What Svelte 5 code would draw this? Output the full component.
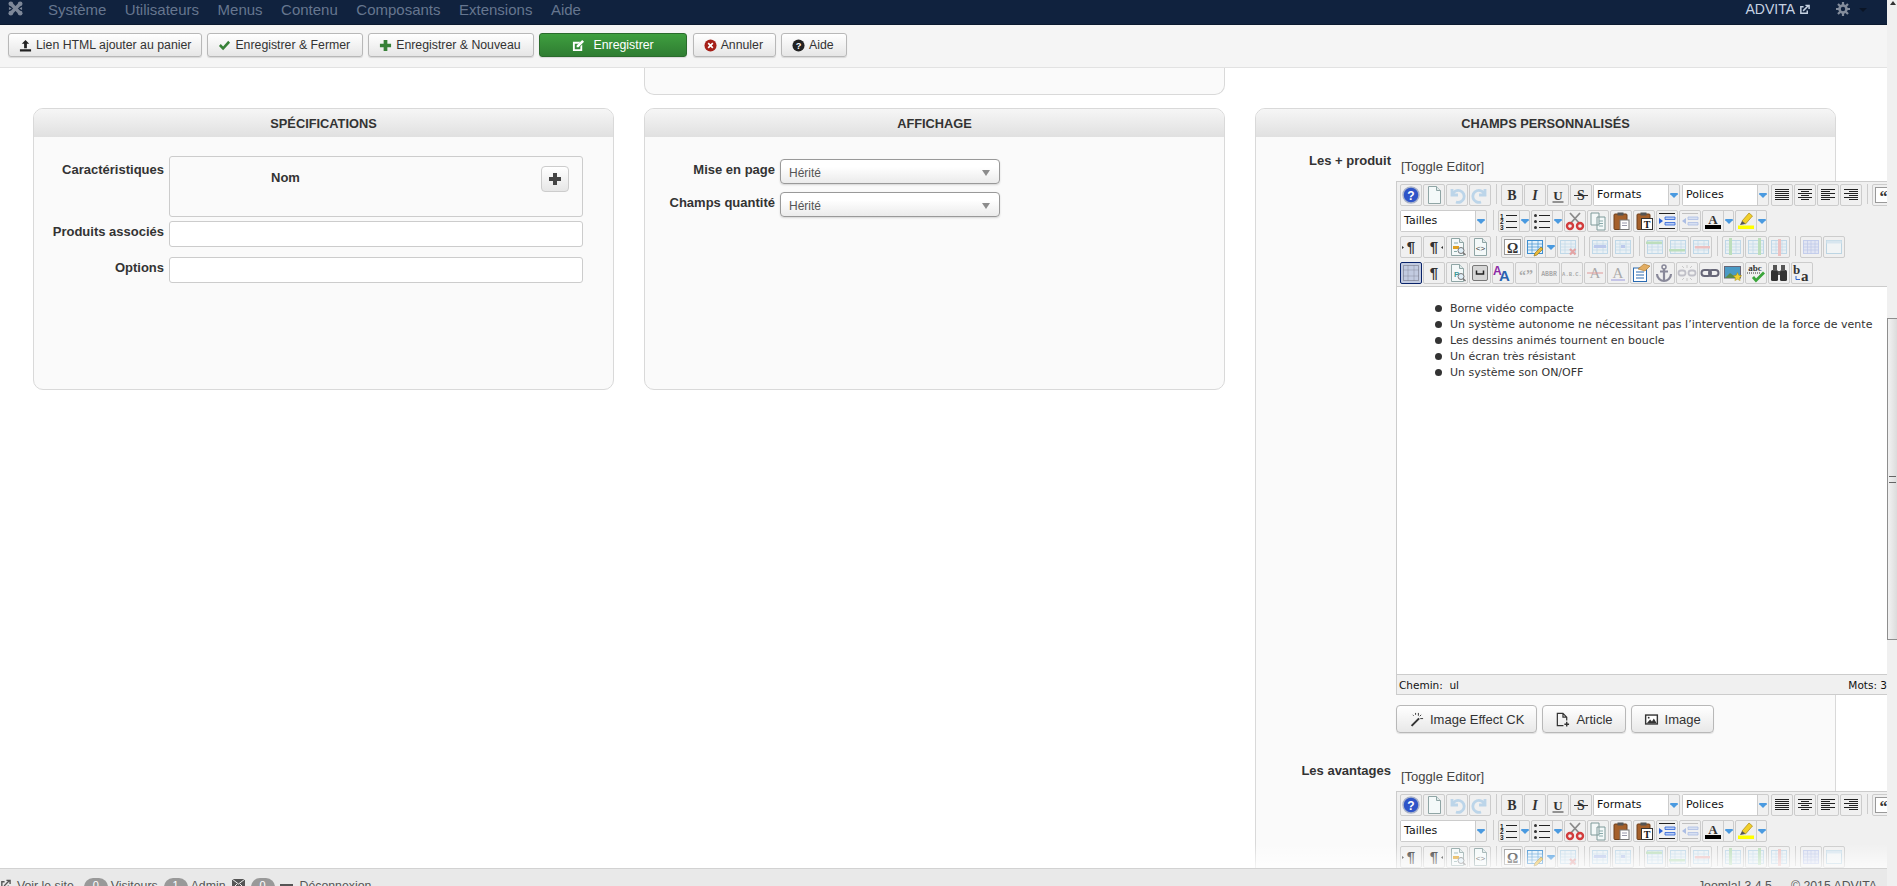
<script>
  const nav = ['Système', 'Utilisateurs', 'Menus', 'Contenu', 'Composants', 'Extensions', 'Aide'];

  const lines = (arr) => arr.map(([a, b, y, c = '#222']) => `<path d="M${a} ${y}H${b}" stroke="${c}" stroke-width="1"/>`).join('');
  const doc = '<path d="M3.500 .5h8l4 4V17.500h-12z" fill="#f4f9f9" stroke="#8fa5a5"/><path d="M11.500 .5V4.500h4" fill="#dfe9e9" stroke="#8fa5a5"/>';
  const tbl = (c = '#86bde0') => `<rect x="1.500" y="2.500" width="15" height="13" fill="#e3f1fa" stroke="${c}"/><path d="M1.500 6h15M1.500 9h15M1.500 12h15M6 2.500v13M12 2.500v13" stroke="${c}" stroke-width=".7"/>`;
  const bigA = (c) => `<text x="9" y="14" font-family="Liberation Serif" font-size="15" text-anchor="middle" fill="${c}">A</text>`;
  const glyph = (t, size = 14, fam = 'Liberation Serif', weight = 'bold', style = 'normal') =>
    `<text x="9" y="14" font-family="${fam}" font-size="${size}" font-weight="${weight}" font-style="${style}" text-anchor="middle" fill="#333">${t}</text>`;
  const clip = '<rect x="2" y="2" width="13" height="15.500" rx="1" fill="#a5602a" stroke="#6e3f1a"/><rect x="5.500" y=".5" width="6" height="3" fill="#555"/>';

  const icons = {
    help: '<circle cx="9" cy="9" r="8" fill="#2f55c8" stroke="#a9b3c9" stroke-width="1.500"/><text x="9" y="13.500" font-family="Liberation Sans" font-size="12" font-weight="bold" text-anchor="middle" fill="#fff">?</text>',
    doc,
    undo: '<path d="M4 3v6h6M4.500 8.500A6 6 0 1 1 8 16" fill="none" stroke="#7db4e0" stroke-width="2.800"/>',
    redo: '<path d="M14 3v6H8M13.500 8.500A6 6 0 1 0 10 16" fill="none" stroke="#7db4e0" stroke-width="2.800"/>',
    b: glyph('B'),
    i: glyph('I', 14, 'Liberation Serif', 'bold', 'italic'),
    u: glyph('U', 13) + '<path d="M3.500 16h11" stroke="#333"/>',
    s: glyph('S', 14) + '<path d="M2 9.500h14" stroke="#333"/>',
    justify: lines([[2, 16, 3.5], [2, 16, 5.5], [2, 16, 7.5], [2, 16, 9.5], [2, 16, 11.5], [2, 16, 13.5]]),
    center: lines([[2, 16, 3.5], [5, 13, 5.5], [2, 16, 7.5], [5, 13, 9.5], [2, 16, 11.5], [5, 13, 13.5]]),
    left: lines([[2, 16, 3.5], [2, 11, 5.5], [2, 16, 7.5], [2, 11, 9.5], [2, 16, 11.5], [2, 11, 13.5]]),
    right: lines([[2, 16, 3.5], [7, 16, 5.5], [2, 16, 7.5], [7, 16, 9.5], [2, 16, 11.5], [7, 16, 13.5]]),
    quote: '<rect x="1.500" y="1.500" width="16" height="15" fill="#fff" stroke="#999"/><text x="9.500" y="15.500" font-family="Liberation Serif" font-size="16" font-weight="bold" text-anchor="middle" fill="#333">“</text>',
    ol: '<text x="0" y="6.500" font-size="6.500" font-weight="bold" font-family="Liberation Sans" fill="#222">1</text><text x="0" y="12" font-size="6.500" font-weight="bold" font-family="Liberation Sans" fill="#222">2</text><text x="0" y="17.500" font-size="6.500" font-weight="bold" font-family="Liberation Sans" fill="#222">3</text>' + lines([[6, 17, 3.5], [6, 17, 9.5], [6, 17, 15.5]]),
    ul: '<circle cx="2.500" cy="3.500" r="1.500" fill="#333"/><circle cx="2.500" cy="9.500" r="1.500" fill="#333"/><circle cx="2.500" cy="15.500" r="1.500" fill="#333"/>' + lines([[6, 17, 3.5], [6, 17, 9.5], [6, 17, 15.5]]),
    cut: '<path d="M4 1l10 11M14 1L4 12" stroke="#8a8a8a" stroke-width="1.800"/><circle cx="4" cy="14" r="3" fill="none" stroke="#d23c3c" stroke-width="2.400"/><circle cx="14" cy="14" r="3" fill="none" stroke="#d23c3c" stroke-width="2.400"/>',
    copy: '<path d="M2 1h8v12H2zM8 5h8v13H8z" fill="#f3f8f8" stroke="#7f9a9a"/><path d="M10 9h4M10 11.500h4M10 14h4" stroke="#8aa"/>',
    paste: clip + '<rect x="8" y="8" width="9" height="9.500" fill="#fff" stroke="#777"/><path d="M10 11h5M10 13.500h5" stroke="#99a"/>',
    pastetext: clip + '<rect x="6.500" y="6.500" width="11" height="11" fill="#fff" stroke="#333"/><text x="12" y="16" font-family="Liberation Serif" font-size="10" font-weight="bold" text-anchor="middle" fill="#111">T</text>',
    indent: lines([[1, 17, 1.5], [1, 17, 16.5]]) + '<path d="M7 5h10v2.500H7zM7 10.500h10V13H7z" fill="#b9cdf5" stroke="#2c62d6" stroke-width=".8"/><path d="M1 6l4 3-4 3z" fill="#2c62d6"/>',
    outdent: lines([[1, 17, 1.5, '#888'], [1, 17, 16.5, '#888']]) + '<path d="M7 5h10v2.500H7zM7 10.500h10V13H7z" fill="#b9cdf5" stroke="#5c82d6" stroke-width=".8"/><path d="M5 6L1 9l4 3z" fill="#5c82d6"/>',
    fore: '<text x="9" y="11.500" font-family="Liberation Serif" font-size="13" font-weight="bold" text-anchor="middle" fill="#333">A</text><rect x="1" y="13" width="16" height="4" fill="#000"/>',
    hilite: '<path d="M5 9l7-8 3.500 3-7 8z" fill="#f2cf2a" stroke="#a88a10" stroke-width=".7"/><path d="M3 13l2-4 3.500 3z" fill="#555"/><rect x="1" y="13.500" width="16" height="3.500" fill="#ff0"/>',
    ltr: glyph('¶', 15, 'Liberation Sans') + '<path d="M0 8l2 1.500L0 11z" fill="#333"/>',
    rtl: glyph('¶', 15, 'Liberation Sans') + '<path d="M18 8l-2 1.500 2 1.500z" fill="#333"/>',
    docfind: doc + '<rect x="5" y="8" width="6" height="3" fill="#e0a020"/><path d="M6 5h4M6 13.500h3" stroke="#8aa"/><circle cx="13" cy="12.500" r="3" fill="#dfeef7" stroke="#777"/><path d="M15 14.500l2.500 2.500" stroke="#777" stroke-width="1.500"/>',
    source: doc + '<text x="9.500" y="13" font-family="Liberation Mono" font-size="8" text-anchor="middle" fill="#333">&lt;&gt;</text>',
    omega: '<rect x="1.500" y="1.500" width="16" height="15" fill="#fff" stroke="#999"/><text x="9.500" y="14.500" font-family="Liberation Serif" font-size="14" font-weight="bold" text-anchor="middle" fill="#333">Ω</text>',
    table: tbl('#3f8fd0') + '<path d="M9 15l6-6 2 2-6 6-3 1z" fill="#e8b93a" stroke="#8a6a10" stroke-width=".6"/>',
    tabledel: tbl() + '<path d="M11 11l5.500 5.500M16.500 11L11 16.500" stroke="#d64a4a" stroke-width="2.200"/>',
    rowprops: tbl() + '<rect x="3" y="7" width="12" height="3" fill="#7f9ae8"/>',
    cellprops: tbl() + '<rect x="7" y="7" width="4" height="3" fill="#7f9ae8"/>',
    rowbefore: tbl() + '<path d="M0 3.500h16V6H0z" fill="#7fc97f"/>',
    rowafter: tbl() + '<path d="M0 11h16v2.500H0z" fill="#7fc97f"/>',
    rowdel: tbl() + '<path d="M3 8h15v2.500H3z" fill="#e88a8a"/>',
    colbefore: tbl() + '<path d="M5 0h3v17H5z" fill="#7fc97f"/>',
    colafter: tbl() + '<path d="M11 0h3v17h-3z" fill="#7fc97f"/>',
    coldel: tbl() + '<path d="M8 1h3v17H8z" fill="#e88a8a"/>',
    grid: '<rect x="1.500" y="2.500" width="15" height="13" fill="#cfd8f7" stroke="#8fa6e8"/><path d="M1.500 6h15M1.500 9h15M1.500 12h15M5.500 2.500v13M9 2.500v13M13 2.500v13" stroke="#7f96dd" stroke-width=".7"/>',
    border: '<rect x="1.500" y="2.500" width="15" height="13" fill="#f4fafd" stroke="#7fb6d4"/><rect x="1.500" y="2.500" width="15" height="3" fill="#bcdcee"/>',
    visual: '<rect x="1.500" y="1.500" width="15" height="15" fill="none" stroke="#667" stroke-dasharray="1 1"/><path d="M6 1.500v15M12 1.500v15M1.500 6h15M1.500 12h15" stroke="#778" stroke-width=".7" stroke-dasharray="1 1"/>',
    pilcrow: glyph('¶', 15, 'Liberation Sans'),
    preview: doc + '<text x="6" y="13" font-family="Liberation Sans" font-size="8" font-weight="bold" fill="#3a9a9a">P</text><circle cx="13" cy="12.500" r="3" fill="#dfeef7" stroke="#777"/><path d="M15 14.500l2.500 2.500" stroke="#777" stroke-width="1.500"/>',
    pagebreak: '<rect x="1.500" y="1.500" width="15" height="15" rx="1.500" fill="#d6d6d6" stroke="#777"/><path d="M5.500 6.500v3.500h7V6.500" fill="none" stroke="#222" stroke-width="1.500"/>',
    styles: '<text x="-1" y="11" font-family="Liberation Sans" font-size="12" font-weight="bold" fill="#8c2aa5">A</text><text x="5" y="17" font-family="Liberation Sans" font-size="15" font-weight="bold" fill="#2a62b0">A</text>',
    quotes: '<text x="9" y="15.500" font-family="Liberation Serif" font-size="14" font-weight="bold" text-anchor="middle" fill="#555">“”</text>',
    abbr: '<text x="9" y="12" font-family="Liberation Mono" font-size="6.500" font-weight="bold" text-anchor="middle" fill="#555">ABBR</text>',
    acronym: '<text x="9" y="12" font-family="Liberation Mono" font-size="5.500" font-weight="bold" text-anchor="middle" fill="#555">A.B.C.</text>',
    del: bigA('#555') + '<path d="M1 9h16" stroke="#c33"/>',
    ins: bigA('#555') + '<path d="M2 16h14" stroke="#33c"/>',
    form: '<rect x="1.500" y="4" width="13" height="13.500" fill="#fff" stroke="#2a6ab0"/><path d="M4 8h8M4 11h8M4 14h8" stroke="#2a6ab0"/><path d="M6 5l6-5 6 2-5 5z" fill="#e2ad62" stroke="#a5702a" stroke-width=".6"/>',
    anchor: '<circle cx="9" cy="3" r="2" fill="none" stroke="#889" stroke-width="1.500"/><path d="M9 5v12M5 7.500h8M2 10c0 4 3.500 7 7 7s7-3 7-7" fill="none" stroke="#889" stroke-width="2.200"/>',
    unlink: '<rect x=".5" y="6.500" width="7" height="5" rx="2.500" fill="none" stroke="#889" stroke-width="1.800"/><rect x="10.500" y="6.500" width="7" height="5" rx="2.500" fill="none" stroke="#889" stroke-width="1.800"/><path d="M9 1v3M9 14v3M4 2l2 2M14 2l-2 2M4 16l2-2M14 16l-2-2" stroke="#999"/>',
    link: '<rect x=".5" y="6" width="9.500" height="6" rx="3" fill="none" stroke="#667" stroke-width="2"/><rect x="8" y="6" width="9.500" height="6" rx="3" fill="none" stroke="#667" stroke-width="2"/>',
    image: '<rect x=".5" y="2.500" width="16" height="11.500" fill="#4a9ac5" stroke="#667"/><path d="M1 14l5-5 4 3 3-2 3 4z" fill="#5a8a4a"/><path d="M13.500 8.500l1.300 2.800 2.900.4-2.100 2 .5 2.900-2.600-1.400-2.600 1.400.5-2.900-2.100-2 2.900-.4z" fill="#f0d030" stroke="#a08a10" stroke-width=".5"/>',
    spell: '<text x="8" y="7" font-family="Liberation Serif" font-size="9" font-weight="bold" text-anchor="middle" fill="#333">abc</text><path d="M0 9h14" stroke="#333" stroke-dasharray="1 1"/><path d="M6 13l3 3.500 8-8" fill="none" stroke="#3aa53a" stroke-width="2.800"/>',
    find: '<rect x="1" y="6" width="7" height="11" rx="1.500" fill="#333"/><rect x="10" y="6" width="7" height="11" rx="1.500" fill="#333"/><rect x="3" y="1" width="4" height="6" fill="#555"/><rect x="11" y="1" width="4" height="6" fill="#555"/><rect x="8" y="7" width="2" height="4" fill="#555"/>',
    replace: '<text x="0" y="10" font-family="Liberation Serif" font-size="13" font-weight="bold" fill="#333">b</text><text x="8" y="17" font-family="Liberation Serif" font-size="15" font-weight="bold" fill="#333">a</text><path d="M3 12v3.500h4" fill="none" stroke="#2a62d0"/>'
  };

  const b = (icon, off = false, active = false) => ({ t: 'btn', icon, off, active });
  const sp = (icon, off = false) => ({ t: 'split', icon, off });
  const sep = { t: 'sep' };
  const sel = (label, w) => ({ t: 'sel', label, w });

  const rows = [
    [b('help'), b('doc'), b('undo', true), b('redo', true), sep, b('b'), b('i'), b('u'), b('s'), sel('Formats', 74), sel('Polices', 74), b('justify'), b('center'), b('left'), b('right'), sep, b('quote')],
    [sel('Tailles', 74), sep, sp('ol'), sp('ul'), b('cut'), b('copy'), b('paste'), b('pastetext'), b('indent'), b('outdent', true), sp('fore'), sp('hilite')],
    [b('ltr'), b('rtl'), b('docfind'), b('source'), sep, b('omega'), sp('table'), b('tabledel', true), sep, b('rowprops', true), b('cellprops', true), sep, b('rowbefore', true), b('rowafter', true), b('rowdel', true), sep, b('colbefore', true), b('colafter', true), b('coldel', true), sep, b('grid', true), b('border', true)],
    [b('visual', false, true), b('pilcrow'), b('preview'), b('pagebreak'), b('styles'), b('quotes', true), b('abbr', true), b('acronym', true), b('del', true), b('ins', true), b('form'), b('anchor'), b('unlink', true), b('link'), b('image'), b('spell'), b('find'), b('replace')]
  ];

  const bullets = [
    'Borne vidéo compacte',
    'Un système autonome ne nécessitant pas l’intervention de la force de vente',
    'Les dessins animés tournent en boucle',
    'Un écran très résistant',
    'Un système son ON/OFF'
  ];
</script>

{#snippet arrow()}
  <svg class="drop" width="8" height="5" viewBox="0 0 9 6"><path d="M0 0h9v1.500L4.500 6 0 1.500z" fill="#4a9ae0" /></svg>
{/snippet}

{#snippet toolbar()}
  <div class="mce-toolbar">
    {#each rows as row}
      <div class="mce-row">
        {#each row as it}
          {#if it.t === 'sep'}
            <span class="mce-sep"></span>
          {:else if it.t === 'sel'}
            <span class="mce-sel">
              <span class="mce-sel-label" style:width="{it.w}px">{it.label}</span>
              <span class="mce-sel-arrow">{@render arrow()}</span>
            </span>
          {:else if it.t === 'split'}
            <span class="mce-split" class:off={it.off}>
              <svg class="ico" width="18" height="18" viewBox="0 0 18 18">{@html icons[it.icon]}</svg>
              <span class="mce-split-arrow">{@render arrow()}</span>
            </span>
          {:else}
            <span class="mce-btn" class:off={it.off} class:active={it.active}>
              <svg class="ico" width="18" height="18" viewBox="0 0 18 18">{@html icons[it.icon]}</svg>
            </span>
          {/if}
        {/each}
      </div>
    {/each}
  </div>
{/snippet}

<div class="page">
  <div class="view">
    <nav class="navbar">
      <svg class="logo" width="15" height="15" viewBox="0 0 16 16">
        <path d="M3 3l10 10M13 3L3 13" stroke="#7e8899" stroke-width="3.600" />
        <circle cx="3" cy="3" r="2.500" fill="#7e8899" /><circle cx="13" cy="3" r="2.500" fill="#7e8899" />
        <circle cx="3" cy="13" r="2.500" fill="#7e8899" /><circle cx="13" cy="13" r="2.500" fill="#7e8899" />
        <path d="M1 6.500L4 8 1 9.500zM15 6.500L12 8l3 1.500z" fill="#7e8899" />
      </svg>
      <ul class="nav-menu">
        {#each nav as item}<li>{item}</li>{/each}
      </ul>
      <div class="nav-right">
        <span class="site">ADVITA</span>
        <svg class="ext" width="11" height="11" viewBox="0 0 12 12">
          <path d="M9 7v3H2V3h3" fill="none" stroke="#c6d2e2" stroke-width="1.600" />
          <path d="M4.500 7.500L10 2M7 1.500h4v4" fill="none" stroke="#c6d2e2" stroke-width="1.600" />
        </svg>
        <svg class="gear" width="14" height="14" viewBox="0 0 14 14">
          <circle cx="7" cy="7" r="3.500" fill="none" stroke="#848d9c" stroke-width="2.600" />
          <path d="M7 0v3M7 11v3M0 7h3M11 7h3M2 2l2 2M10 10l2 2M12 2l-2 2M4 10l-2 2" stroke="#848d9c" stroke-width="2.200" />
        </svg>
        <span class="caret"></span>
      </div>
    </nav>

    <div class="subhead">
      <button class="btn first-btn">
        <svg width="13" height="13" viewBox="0 0 14 14"><path d="M7 1l4 4H8.500v5h-3V5H3zM1 11h12v2.500H1z" fill="#222" /></svg>
        Lien HTML ajouter au panier
      </button>
      <button class="btn">
        <svg width="13" height="13" viewBox="0 0 14 14"><path d="M1 7.500l2-2 2.500 2.500L11 2l2 2-7.500 8z" fill="#378137" /></svg>
        Enregistrer &amp; Fermer
      </button>
      <button class="btn">
        <svg width="13" height="13" viewBox="0 0 14 14"><path d="M5 1h4v4h4v4H9v4H5V9H1V5h4z" fill="#378137" /></svg>
        Enregistrer &amp; Nouveau
      </button>
      <button class="btn btn-green">
        <svg width="13" height="13" viewBox="0 0 14 14"><path d="M1 3h8L7 5H3v6h6V8l2-2v7H1z" fill="#fff" /><path d="M5 7l6-6 2 2-6 6H5z" fill="#fff" /></svg>
        Enregistrer
      </button>
      <button class="btn">
        <svg width="13" height="13" viewBox="0 0 14 14"><circle cx="7" cy="7" r="6.500" fill="#a51f18" /><path d="M4.500 4.500l5 5M9.500 4.500l-5 5" stroke="#fff" stroke-width="1.800" /></svg>
        Annuler
      </button>
      <button class="btn">
        <svg width="13" height="13" viewBox="0 0 14 14"><circle cx="7" cy="7" r="6.500" fill="#222" /><text x="7" y="10.800" font-family="Liberation Sans" font-size="10" font-weight="bold" text-anchor="middle" fill="#fff">?</text></svg>
        Aide
      </button>
    </div>

    <main class="content">
      <div class="grid">
        <div></div>
        <div class="stub"></div>
        <div></div>

        <section class="panel">
          <h3>Spécifications</h3>
          <div class="panel-body">
            <div class="form-row">
              <span class="form-label first">Caractéristiques</span>
              <div class="subform">
                <span class="subform-name">Nom</span>
                <span class="add-btn">
                  <svg width="14" height="14" viewBox="0 0 14 14"><path d="M5 1h4v4h4v4H9v4H5V9H1V5h4z" fill="#444" /></svg>
                </span>
              </div>
            </div>
            <div class="form-row">
              <span class="form-label">Produits associés</span>
              <input class="text-input" type="text" />
            </div>
            <div class="form-row gap">
              <span class="form-label">Options</span>
              <input class="text-input" type="text" />
            </div>
          </div>
        </section>

        <section class="panel">
          <h3>Affichage</h3>
          <div class="panel-body display">
            <div class="form-row">
              <span class="form-label">Mise en page</span>
              <div class="select">Hérité<span class="select-caret"></span></div>
            </div>
            <div class="form-row">
              <span class="form-label">Champs quantité</span>
              <div class="select">Hérité<span class="select-caret"></span></div>
            </div>
          </div>
        </section>

        <section class="panel">
          <h3>Champs personnalisés</h3>
          <div class="panel-body custom">
            <div class="form-row editor-row">
              <span class="form-label">Les + produit</span>
              <div class="editor-wrap">
                <div class="toggle">[Toggle Editor]</div>
                <div class="editor">
                  {@render toolbar()}
                  <div class="mce-content">
                    <ul>
                      {#each bullets as line}<li>{line}</li>{/each}
                    </ul>
                  </div>
                  <div class="mce-status"><span>Chemin:&nbsp; ul</span><span>Mots: 3</span></div>
                </div>
                <div class="editor-btns">
                  <button class="btn-plain">
                    <svg width="15" height="15" viewBox="0 0 16 16"><path d="M2 14L10 6l1.500 1.500-8 8z" fill="#333" /><path d="M10 1v3M13 3l-1.500 1.500M15 7h-3M4 3l1 1M7 1v2" stroke="#333" /></svg>
                    Image Effect CK
                  </button>
                  <button class="btn-plain">
                    <svg width="15" height="15" viewBox="0 0 16 16"><path d="M9 14.500H2.500v-13h6l4 4V9M8.500 1.500v4h4" fill="none" stroke="#333" stroke-width="1.300" /><path d="M10 13h5M12.500 10.500v5" stroke="#333" stroke-width="1.500" /></svg>
                    Article
                  </button>
                  <button class="btn-plain">
                    <svg width="15" height="15" viewBox="0 0 16 16"><rect x="1" y="2.500" width="14" height="11" fill="#333" /><rect x="2.500" y="4" width="11" height="8" fill="#fff" /><path d="M3 12l3.500-4 2 2 2-3 3 5z" fill="#333" /><circle cx="5" cy="6" r="1" fill="#333" /></svg>
                    Image
                  </button>
                </div>
              </div>
            </div>
            <div class="form-row editor-row second">
              <span class="form-label">Les avantages</span>
              <div class="editor-wrap">
                <div class="toggle">[Toggle Editor]</div>
                <div class="editor">{@render toolbar()}</div>
              </div>
            </div>
          </div>
        </section>
      </div>
      <div class="fade"></div>
    </main>

    <footer class="status">
      <div class="status-left">
        <svg width="11" height="11" viewBox="0 0 12 12"><path d="M9 7v3H2V3h3M4.500 7.500L10 2M7 1.500h4v4" fill="none" stroke="#555" stroke-width="1.500" /></svg>
        <span class="s-link">Voir le site</span>
        <span class="badge">0</span><span>Visiteurs</span>
        <span class="badge">1</span><span>Admin</span>
        <svg class="mail" width="13" height="10" viewBox="0 0 13 10"><rect width="13" height="10" fill="#555" /><path d="M0 0l6.500 5L13 0M0 10l5-5M13 10L8 5" stroke="#eee" fill="none" /></svg>
        <span class="badge">0</span>
        <span class="minus"></span>
        <span>Déconnexion</span>
      </div>
      <div class="status-right">Joomla! 3.4.5 — © 2015 ADVITA</div>
    </footer>
  </div>

  <div class="scrollbar">
    <span class="up"></span>
    <div class="thumb"><span class="grip"></span></div>
  </div>
</div>

<style>
  :global(body) { margin: 0; font-family: "Liberation Sans", Arial, sans-serif; color: #333; background: #fff; }
  .page { display: flex; height: 886px; overflow: hidden; }
  .view { flex: 1; min-width: 0; display: flex; flex-direction: column; }

  .navbar { flex: none; height: 25px; box-sizing: border-box; background: #10223e; border-bottom: 1px solid #0b1a30; display: flex; align-items: flex-start; padding-left: 8px; }
  .logo { margin-top: 1px; }
  .nav-menu { list-style: none; margin: 0 0 0 25px; padding: 0; display: flex; gap: 18.5px; font-size: 15px; line-height: 19px; color: #66768f; }
  .nav-right { margin-left: auto; display: flex; align-items: flex-start; padding-right: 20px; }
  .site { font-size: 14px; line-height: 18px; color: #c6d2e2; }
  .ext { margin: 4px 0 0 4px; }
  .gear { margin: 2px 0 0 26px; }
  .caret { margin: 8px 0 0 9px; border: 4px solid transparent; border-top-color: #0a1526; border-bottom: 0; }

  .subhead { flex: none; height: 43px; box-sizing: border-box; background: #f5f5f5; border-bottom: 1px solid #e2e2e2; display: flex; align-items: flex-start; padding: 8px 0 0 8px; gap: 5px; }
  .btn { height: 24px; box-sizing: border-box; padding: 0 12px 0 10px; border: 1px solid #b8b8b8; border-radius: 3px; background: linear-gradient(#fff, #e6e6e6); box-shadow: 0 1px 1px rgba(0,0,0,0.12); font: 12.3px "Liberation Sans", Arial, sans-serif; color: #333; display: inline-flex; align-items: center; gap: 4px; white-space: nowrap; }
  .first-btn { padding-right: 10px; }
  .btn-green { width: 148px; margin-right: 1px; padding: 0; justify-content: center; color: #fff; background: linear-gradient(#3f9f3f, #2f7d32); border-color: #2a6b2c; gap: 9px; }

  .content { flex: 1; min-height: 0; overflow: hidden; position: relative; background: #fff; }
  .grid { display: grid; grid-template-columns: repeat(3, 581px); column-gap: 30px; padding-left: 33px; align-items: start; }
  .stub { height: 27px; box-sizing: border-box; background: #fafafa; border: 1px solid #d9d9d9; border-top: 0; border-radius: 0 0 10px 10px; margin-bottom: 13px; }
  .panel { box-sizing: border-box; min-height: 282px; background: #fafafa; border: 1px solid #d9d9d9; border-radius: 10px; }
  .panel h3 { margin: 0; height: 28px; line-height: 29px; text-align: center; font-size: 12.8px; font-weight: bold; text-transform: uppercase; color: #333; background: linear-gradient(#f6f6f6, #e0e0e0); border-radius: 9px 9px 0 0; }
  .panel-body { padding: 19px 0 0; }
  .panel-body.display { padding-top: 22px; }
  .panel-body.custom { padding-top: 17px; }

  .form-row { display: flex; gap: 5px; margin-bottom: 4px; align-items: flex-start; }
  .form-row.gap { margin-top: 10px; }
  .form-label { flex: none; width: 130px; text-align: right; font-size: 13px; font-weight: bold; line-height: 16px; padding-top: 3px; color: #333; }
  .form-label.first { padding-top: 6px; }
  .subform { width: 414px; height: 61px; box-sizing: border-box; border: 1px solid #ccc; border-radius: 3px; padding: 9px 13px 0 101px; display: flex; justify-content: space-between; align-items: flex-start; }
  .subform-name { font-size: 13px; font-weight: bold; margin-top: 4px; }
  .add-btn { width: 28px; height: 26px; box-sizing: border-box; border: 1px solid #ccc; border-radius: 4px; background: linear-gradient(#fff, #e6e6e6); display: flex; align-items: center; justify-content: center; }
  .text-input { width: 414px; height: 26px; box-sizing: border-box; margin: 0; border: 1px solid #ccc; border-radius: 3px; background: #fff; }
  .select { position: relative; width: 220px; height: 25px; box-sizing: border-box; margin-bottom: 4px; border: 1px solid #999; border-radius: 4px; background: linear-gradient(#fff 30%, #ebebeb); box-shadow: 0 1px 2px rgba(0,0,0,0.15); padding-left: 8px; font-size: 12px; line-height: 26px; color: #555; }
  .select-caret { position: absolute; right: 9px; top: 10px; border: 4px solid transparent; border-top: 6px solid #8c8c8c; border-bottom: 0; }

  .editor-row { align-items: flex-start; margin: 0; gap: 5px; }
  .editor-row .form-label { width: 135px; padding-top: 0; margin-top: -1px; }
  .editor-row.second { margin-top: 31px; }
  .editor-wrap { width: 494px; flex: none; }
  .toggle { font-size: 13px; line-height: 16px; padding: 4px 0 0 5px; height: 24px; box-sizing: border-box; margin: 1px 0 2px; color: #444; }
  .editor { border: 1px solid #ccc; border-bottom: 0; background: #f0f0f0; overflow: hidden; }
  .mce-toolbar { padding: 2px 0 2px 3px; height: 100px; box-sizing: content-box; overflow: hidden; border-bottom: 1px solid #ccc; }
  .mce-row { display: flex; gap: 1px; height: 26px; white-space: nowrap; }
  .mce-btn, .mce-split, .mce-sel { height: 22px; box-sizing: border-box; border: 1px solid #ccc; border-radius: 2px; background: #f0f0f0; flex: none; }
  .mce-btn { width: 22px; display: flex; align-items: center; justify-content: center; }
  .mce-btn.active { background: #c2cbe0; border-color: #0a246a; }
  .mce-split { display: flex; align-items: center; width: 32px; padding-left: 1px; }
  .mce-split-arrow { width: 10px; height: 20px; border-left: 1px solid #ccc; display: flex; align-items: center; justify-content: center; margin-left: 1px; }
  .ico { overflow: visible; flex: none; }
  .off .ico { opacity: 0.45; }
  .mce-sel { display: flex; align-items: stretch; background: #f0f0f0; margin-right: 1px; }
  .mce-sel-label { box-sizing: border-box; background: #fff; padding-left: 3px; font: 11px/20px "DejaVu Sans", sans-serif; color: #111; }
  .mce-sel-arrow { width: 10px; border-left: 1px solid #ccc; display: flex; align-items: center; justify-content: center; }
  .mce-sep { width: 1px; height: 20px; margin: 0 3px 0 4px; background: #ccc; flex: none; }
  .drop { display: block; }

  .mce-content { height: 387px; box-sizing: border-box; background: #fff; padding-top: 14px; font: 11px/16px "DejaVu Sans", sans-serif; color: #333; overflow: hidden; }
  .mce-content ul { margin: 0; padding: 0 0 0 53px; list-style: none; }
  .mce-content li { position: relative; }
  .mce-content li::before { content: ""; position: absolute; left: -15px; top: 4px; width: 7px; height: 7px; border-radius: 50%; background: #333; }
  .mce-status { height: 21px; box-sizing: border-box; padding: 0 2px; background: #f0f0f0; border-top: 1px solid #ccc; border-bottom: 1px solid #ccc; font: 10.5px/20px "DejaVu Sans", sans-serif; color: #111; display: flex; justify-content: space-between; white-space: nowrap; }
  .editor-btns { display: flex; gap: 5px; margin-top: 10px; }
  .btn-plain { height: 28px; box-sizing: border-box; padding: 0 12px; border: 1px solid #b8b8b8; border-radius: 4px; background: linear-gradient(#fff, #e8e8e8); box-shadow: 0 1px 1px rgba(0,0,0,0.1); font: 13px "Liberation Sans", Arial, sans-serif; color: #333; display: inline-flex; align-items: center; gap: 6px; white-space: nowrap; }

  .fade { position: absolute; left: 0; right: 0; bottom: 0; height: 24px; background: linear-gradient(rgba(255,255,255,0), rgba(255,255,255,0.7)); }

  .status { flex: none; height: 18px; box-sizing: border-box; overflow: hidden; background: #e9e9e9; border-top: 1px solid #d2d2d2; display: flex; justify-content: space-between; padding: 10px 10px 0 0; font-size: 12.3px; line-height: 14px; color: #555; white-space: nowrap; }
  .status-left { display: flex; align-items: flex-start; gap: 3px; }
  .status-left svg { flex: none; margin-top: 0; }
  .status-left .mail { margin-left: 3px; }
  .s-link { margin: 0 4px 0 3px; }
  .badge { min-width: 24px; height: 18px; margin-left: 3px; margin-top: -1px; border-radius: 9px; background: #999; color: #fff; text-align: center; font-size: 11px; }
  .minus { width: 13px; height: 3px; margin: 5px 4px 0 2px; background: #555; }

  .scrollbar { flex: none; width: 10px; background: #f0f0f0; position: relative; }
  .up { position: absolute; left: 3px; top: 1px; border: 3px solid transparent; border-bottom: 4px solid #333; border-top: 0; }
  .thumb { position: absolute; left: 0; right: 0; top: 318px; height: 322px; box-sizing: border-box; border: 1px solid #8e8e8e; border-right: 0; background: linear-gradient(90deg, #f2f2f2, #dcdcdc); display: flex; align-items: center; justify-content: center; }
  .grip { width: 7px; height: 5px; border-top: 1px solid #666; border-bottom: 1px solid #666; position: relative; }
</style>
